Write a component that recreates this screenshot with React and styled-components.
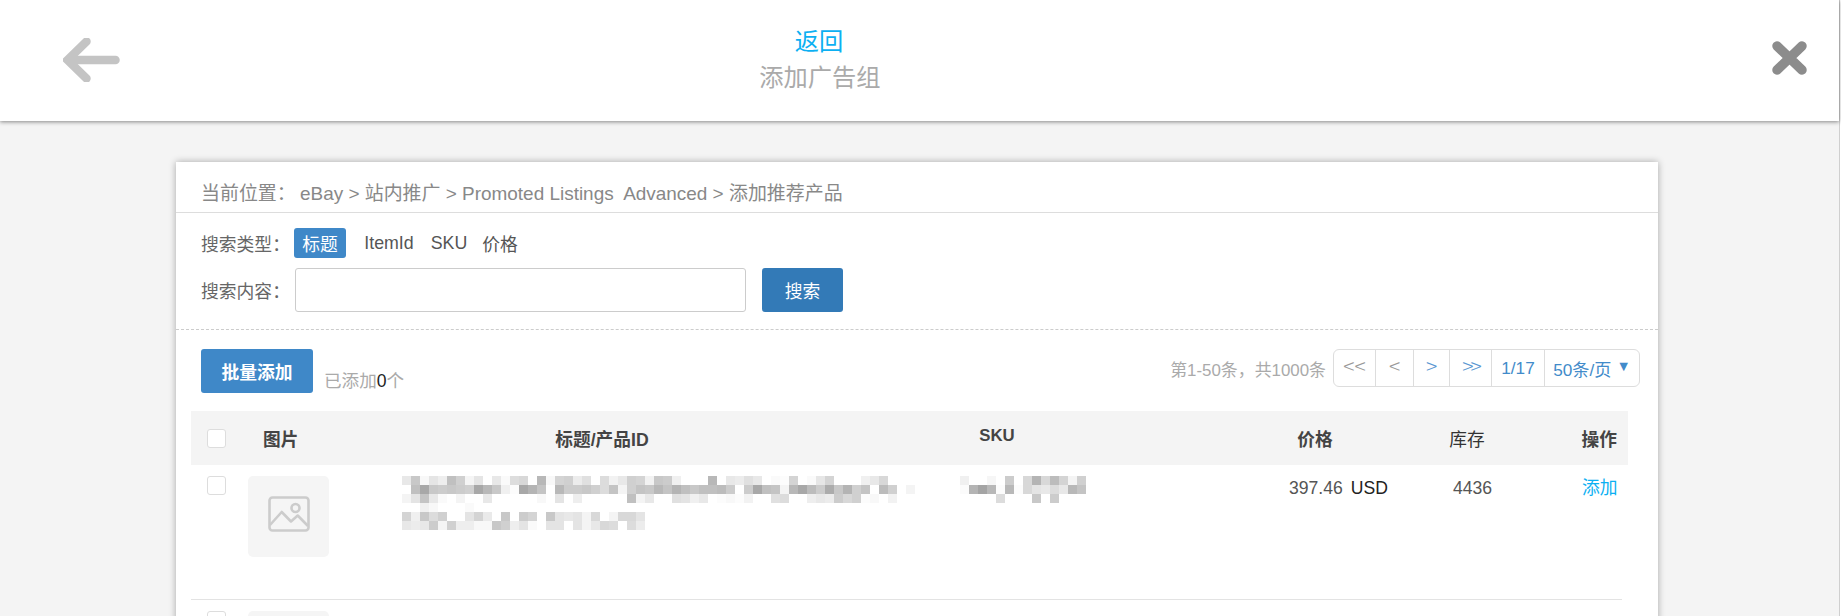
import React from 'react';
import styled, { createGlobalStyle } from 'styled-components';

const Global = createGlobalStyle`
  html, body { margin: 0; padding: 0; background: #fff; }
  body { font-family: "Liberation Sans", "Noto Sans CJK SC", sans-serif; overflow: hidden; }
  * { box-sizing: border-box; }
`;

const Screen = styled.div`
  display: flex;
  width: 1841px;
  height: 616px;
  overflow: hidden;
`;
const Edge = styled.div`
  width: 2px;
  flex: none;
  background: #fff;
  border-left: 1px solid #cfcfcf;
`;
const Main = styled.div`
  flex: 1;
  min-width: 0;
  background: #f4f4f4;
`;
const TopBar = styled.header`
  position: relative;
  display: grid;
  grid-template-columns: 700px 240px 1fr;
  align-items: center;
  height: 121px;
  padding-bottom: 1px;
  background: #fff;
  box-shadow: 0 1px 4px rgba(0, 0, 0, 0.45);
`;
const BackIcon = styled.svg`
  display: block;
  margin-left: 63px;
`;
const CloseIcon = styled.svg`
  display: block;
  justify-self: end;
  margin-right: 32px;
  margin-top: -4px;
`;
const TitleBlock = styled.div`
  display: flex;
  flex-direction: column;
  align-items: center;
  gap: 2px;
  font-size: 24.25px;
  line-height: 34px;
`;
const BackLink = styled.span`
  color: #0cb0f2;
  margin-left: -2px;
`;
const PageTitle = styled.span`
  color: #aaa;
`;
const Body = styled.main`
  padding: 41px 0 0 176px;
`;
const Card = styled.section`
  width: 1482px;
  background: #fff;
  box-shadow: 0 0 7px rgba(0, 0, 0, 0.32);
`;
const Crumb = styled.div`
  display: flex;
  align-items: flex-end;
  height: 51px;
  padding: 0 0 5px 25px;
  border-bottom: 1px solid #ddd;
  font-size: 18.95px;
  line-height: 26px;
  color: #888;
  white-space: pre;
`;
const CrumbLabel = styled.span`
  width: 99px;
`;
const Filters = styled.div`
  display: flex;
  flex-direction: column;
  gap: 10px;
  padding: 15px 25px 17px;
  border-bottom: 1px dashed #ccc;
  font-size: 17.8px;
  color: #555;
`;
const FilterRow = styled.div`
  display: flex;
  align-items: center;
`;
const FilterLabel = styled.span`
  width: 93px;
  flex: none;
  color: #666;
  white-space: nowrap;
`;
const Tab = styled.span`
  display: flex;
  align-items: center;
  justify-content: center;
  height: 30px;
  width: ${p => p.$w}px;
  margin-right: ${p => p.$mr || 0}px;
  border-radius: 3px;
  background: ${p => (p.$active ? '#3f88c8' : 'transparent')};
  color: ${p => (p.$active ? '#fff' : '#555')};
`;
const SearchInput = styled.div`
  width: 451px;
  height: 44px;
  margin-left: 1px;
  border: 1px solid #ccc;
  border-radius: 3px;
  background: #fff;
`;
const SolidButton = styled.button`
  display: flex;
  align-items: center;
  justify-content: center;
  height: 44px;
  width: ${p => p.$w}px;
  margin-left: ${p => p.$ml || 0}px;
  padding: 0;
  border: none;
  border-radius: 3px;
  background: ${p => p.$bg};
  color: #fff;
  font-family: inherit;
  font-size: 17.8px;
  font-weight: ${p => p.$weight || 400};
`;
const Toolbar = styled.div`
  display: flex;
  align-items: flex-start;
  padding: 19px 18px 0 25px;
  height: 81px;
`;
const AddedNote = styled.span`
  margin: 20px 0 0 11px;
  font-size: 17.6px;
  line-height: 24px;
  color: #aaa;
`;
const AddedCount = styled.b`
  font-weight: 400;
  color: #222;
`;
const Pager = styled.div`
  display: flex;
  align-items: center;
  margin-left: auto;
`;
const PagerInfo = styled.span`
  margin-right: 7px;
  font-size: 16.9px;
  color: #aaa;
`;
const PagerBox = styled.div`
  display: flex;
  height: 38px;
  width: 307px;
  border: 1px solid #ddd;
  border-radius: 6px;
`;
const PagerCell = styled.span`
  display: flex;
  align-items: center;
  justify-content: center;
  gap: 5px;
  width: ${p => p.$w}px;
  flex: ${p => (p.$w ? 'none' : 1)};
  border-left: ${p => (p.$first ? 'none' : '1px solid #ddd')};
  font-size: 17.2px;
  white-space: nowrap;
  color: #428bca;
`;
const PagerArrow = styled(PagerCell)`
  font-family: "Noto Sans CJK SC", sans-serif;
  font-size: 21px;
  font-weight: 300;
  padding-bottom: 6px;
  letter-spacing: ${p => (p.$tight ? '-3px' : '0')};
  color: ${p => (p.$muted ? '#999' : '#5a97d2')};
`;
const Caret = styled.span`
  font-size: 14.5px;
  margin-top: -4px;
`;
const Table = styled.div`
  margin: 0 15px;
  width: 1437px;
`;
const columns = '57px 154px 400px 390px 246px 58px 132px';
const HeadRow = styled.div`
  display: grid;
  grid-template-columns: ${columns};
  align-items: center;
  height: 54px;
  background: #f4f4f4;
  font-size: 17.7px;
  color: #444;
`;
const HeadCell = styled.div`
  text-align: ${p => p.$align || 'center'};
  padding-left: ${p => p.$pl || 0}px;
  padding-right: ${p => p.$pr || 0}px;
  font-weight: ${p => (p.$plain ? 400 : 700)};
  color: ${p => (p.$plain ? '#333' : '#444')};
  white-space: nowrap;
`;
const SkuHead = styled(HeadCell)`
  font-size: 16.8px;
  padding-bottom: 4px;
`;
const CheckBox = styled.span`
  display: block;
  width: 19px;
  height: 19px;
  margin-left: 16px;
  border: 1px solid #ddd;
  border-radius: 3px;
  background: #fff;
`;
const DataRow = styled.div`
  display: grid;
  grid-template-columns: ${columns};
  align-items: start;
  height: 135px;
  padding-top: 11px;
  margin-right: ${p => (p.$last ? 0 : 6)}px;
  border-bottom: ${p => (p.$last ? 'none' : '1px solid #e3e3e3')};
  font-size: 17.6px;
  line-height: 24px;
  color: #555;
`;
const Thumb = styled.div`
  display: flex;
  align-items: center;
  justify-content: center;
  width: 81px;
  height: 81px;
  border-radius: 5px;
  background: #f5f5f5;
  padding-bottom: 5px;
`;
const Mosaic = styled.svg`
  display: block;
  shape-rendering: crispEdges;
  margin-left: ${p => p.$ml || 0}px;
`;
const PriceCell = styled.div`
  display: flex;
  gap: 8px;
  padding-left: 97px;
  white-space: nowrap;
`;
const Currency = styled.span`
  color: #222;
`;
const StockCell = styled.div`
  padding-left: 15px;
  white-space: nowrap;
`;
const AddLink = styled.div`
  padding-left: 86px;
  color: #0cb0f2;
  white-space: nowrap;
  font-size: 17.8px;
`;

const titleRows = [
  ['e8','c8','f8','e5','ee','c0','d0','f5','e5','ff','e8','fa','dd','d8','ff','b8','f8','d4','d0','ec','e0','ff','dc','f2','e8','d0','d4','f2','c8','cc','f0','ff','ff','ff','b8','ff','e8','ec','e0','e8','ff','fa','fc','d4','ff','fa','e6','d4','ff','ff','ff','f0','e8','d8'],
  ['ff','c0','a8','c8','cc','c8','cc','d0','a8','b8','c8','f0','fc','a8','b4','c4','ff','b8','cc','cc','c8','d0','dc','c4','f4','d0','c4','c8','b8','c4','b4','c0','c8','c0','c0','bc','cc','ff','cc','a8','c0','c4','f4','b8','a8','bc','cc','ac','c8','b4','d0','c4','ff','bc','d0','ff','f4'],
  ['f4','e4','c4','e8','fa','ff','f4','ff','ff','e8','ff','ff','ff','ff','ff','f8','ff','e4','ff','ee','ff','ff','ff','ff','ff','c0','f4','e8','ff','ff','e0','e4','f0','e8','ff','fc','f8','fc','f2','ff','ff','e0','dc','ff','ff','ee','e8','ec','cc','d8','d0','fc','f8','ff','f2'],
  ['ff','ff','f0','f8','ff','ff','ff','fa'],
  ['d4','f0','c8','dc','d0','ff','ff','e4','d4','ea','ff','c8','ff','cc','d4','ff','c8','e4','e8','e4','f4','d8','ff','f4','d8','d8','e4'],
  ['e8','ec','e8','cc','f4','d0','ee','ee','f8','f8','c8','d0','ee','e4','fa','ff','e4','e4','ff','e4','f4','e8','d8','dc','ff','dc','ec'],
];
const skuRows = [
  ['f0','ff','ff','f6','ff','cc','ff','d8','b4','d8','bc','d4','f4','d0'],
  ['fb','b4','a4','b8','fc','b8','fc','d8','e4','e8','dc','e8','b8','c4'],
  ['ff','ff','ff','ff','dc','ff','ff','ff','c8','ff','cc'],
];

function Pixels({ rows, ml }) {
  const cols = Math.max(...rows.map(r => r.length));
  return (
    <Mosaic $ml={ml} width={cols * 9} height={rows.length * 9} viewBox={`0 0 ${cols * 9} ${rows.length * 9}`}>
      {rows.flatMap((r, y) =>
        r.map((c, x) => (c === 'ff' ? null : <rect key={`${y}-${x}`} x={x * 9} y={y * 9} width="9" height="9" fill={`#${c}${c}${c}`} />))
      )}
    </Mosaic>
  );
}

const PictureIcon = () => (
  <svg width="42" height="36" viewBox="0 0 42 36" fill="none" stroke="#ccc" strokeWidth="2.6" strokeLinejoin="round">
    <rect x="1.5" y="1.5" width="39" height="33" rx="3" />
    <circle cx="27.5" cy="12" r="4" />
    <path d="M2 29 L13.7 16 L23 25.5 L29.7 19.5 L40 30" />
  </svg>
);

export default function App() {
  return (
    <>
      <Global />
      <Screen>
        <Main>
          <TopBar>
            <BackIcon width="57" height="44" viewBox="0 0 57 44" fill="none" stroke="#c4c4c4" strokeWidth="8.5">
              <path d="M23.5 3.5 L4.5 22 L23.5 40.5" strokeLinecap="round" strokeLinejoin="miter" />
              <path d="M6 22 H52.5" strokeWidth="8.5" strokeLinecap="round" />
            </BackIcon>
            <TitleBlock>
              <BackLink>返回</BackLink>
              <PageTitle>添加广告组</PageTitle>
            </TitleBlock>
            <CloseIcon width="35" height="34" viewBox="0 0 35 34" fill="none" stroke="#8c8c8c" strokeWidth="9.5" strokeLinecap="round">
              <path d="M5 5 L30 29 M30 5 L5 29" />
            </CloseIcon>
          </TopBar>
          <Body>
            <Card>
              <Crumb>
                <CrumbLabel>当前位置：</CrumbLabel>
                <span>eBay &gt; 站内推广 &gt; Promoted Listings  Advanced &gt; 添加推荐产品</span>
              </Crumb>
              <Filters>
                <FilterRow>
                  <FilterLabel>搜索类型：</FilterLabel>
                  <Tab $active $w={52} $mr={17}>标题</Tab>
                  <Tab $w={52} $mr={15}>ItemId</Tab>
                  <Tab $w={38} $mr={13}>SKU</Tab>
                  <Tab $w={38}>价格</Tab>
                </FilterRow>
                <FilterRow>
                  <FilterLabel>搜索内容：</FilterLabel>
                  <SearchInput />
                  <SolidButton $w={81} $ml={16} $bg="#337ab7">搜索</SolidButton>
                </FilterRow>
              </Filters>
              <Toolbar>
                <SolidButton $w={112} $bg="#3f88c8" $weight={700}>批量添加</SolidButton>
                <AddedNote>已添加<AddedCount>0</AddedCount>个</AddedNote>
                <Pager>
                  <PagerInfo>第1-50条，共1000条</PagerInfo>
                  <PagerBox>
                    <PagerArrow $first $w={41} $muted>&lt;&lt;</PagerArrow>
                    <PagerArrow $w={38} $muted>&lt;</PagerArrow>
                    <PagerArrow $w={36}>&gt;</PagerArrow>
                    <PagerArrow $w={42} $tight>&gt;&gt;</PagerArrow>
                    <PagerCell $w={53}>1/17</PagerCell>
                    <PagerCell>50条/页<Caret>▼</Caret></PagerCell>
                  </PagerBox>
                </Pager>
              </Toolbar>
              <Table>
                <HeadRow>
                  <CheckBox />
                  <HeadCell $align="left" $pl={15}>图片</HeadCell>
                  <HeadCell>标题/产品ID</HeadCell>
                  <SkuHead>SKU</SkuHead>
                  <HeadCell>价格</HeadCell>
                  <HeadCell $plain>库存</HeadCell>
                  <HeadCell $align="right" $pr={11}>操作</HeadCell>
                </HeadRow>
                <DataRow>
                  <CheckBox />
                  <Thumb><PictureIcon /></Thumb>
                  <Pixels rows={titleRows} />
                  <Pixels rows={skuRows} ml={158} />
                  <PriceCell>397.46<Currency>USD</Currency></PriceCell>
                  <StockCell>4436</StockCell>
                  <AddLink>添加</AddLink>
                </DataRow>
                <DataRow $last>
                  <CheckBox />
                  <Thumb />
                </DataRow>
              </Table>
            </Card>
          </Body>
        </Main>
        <Edge />
      </Screen>
    </>
  );
}
